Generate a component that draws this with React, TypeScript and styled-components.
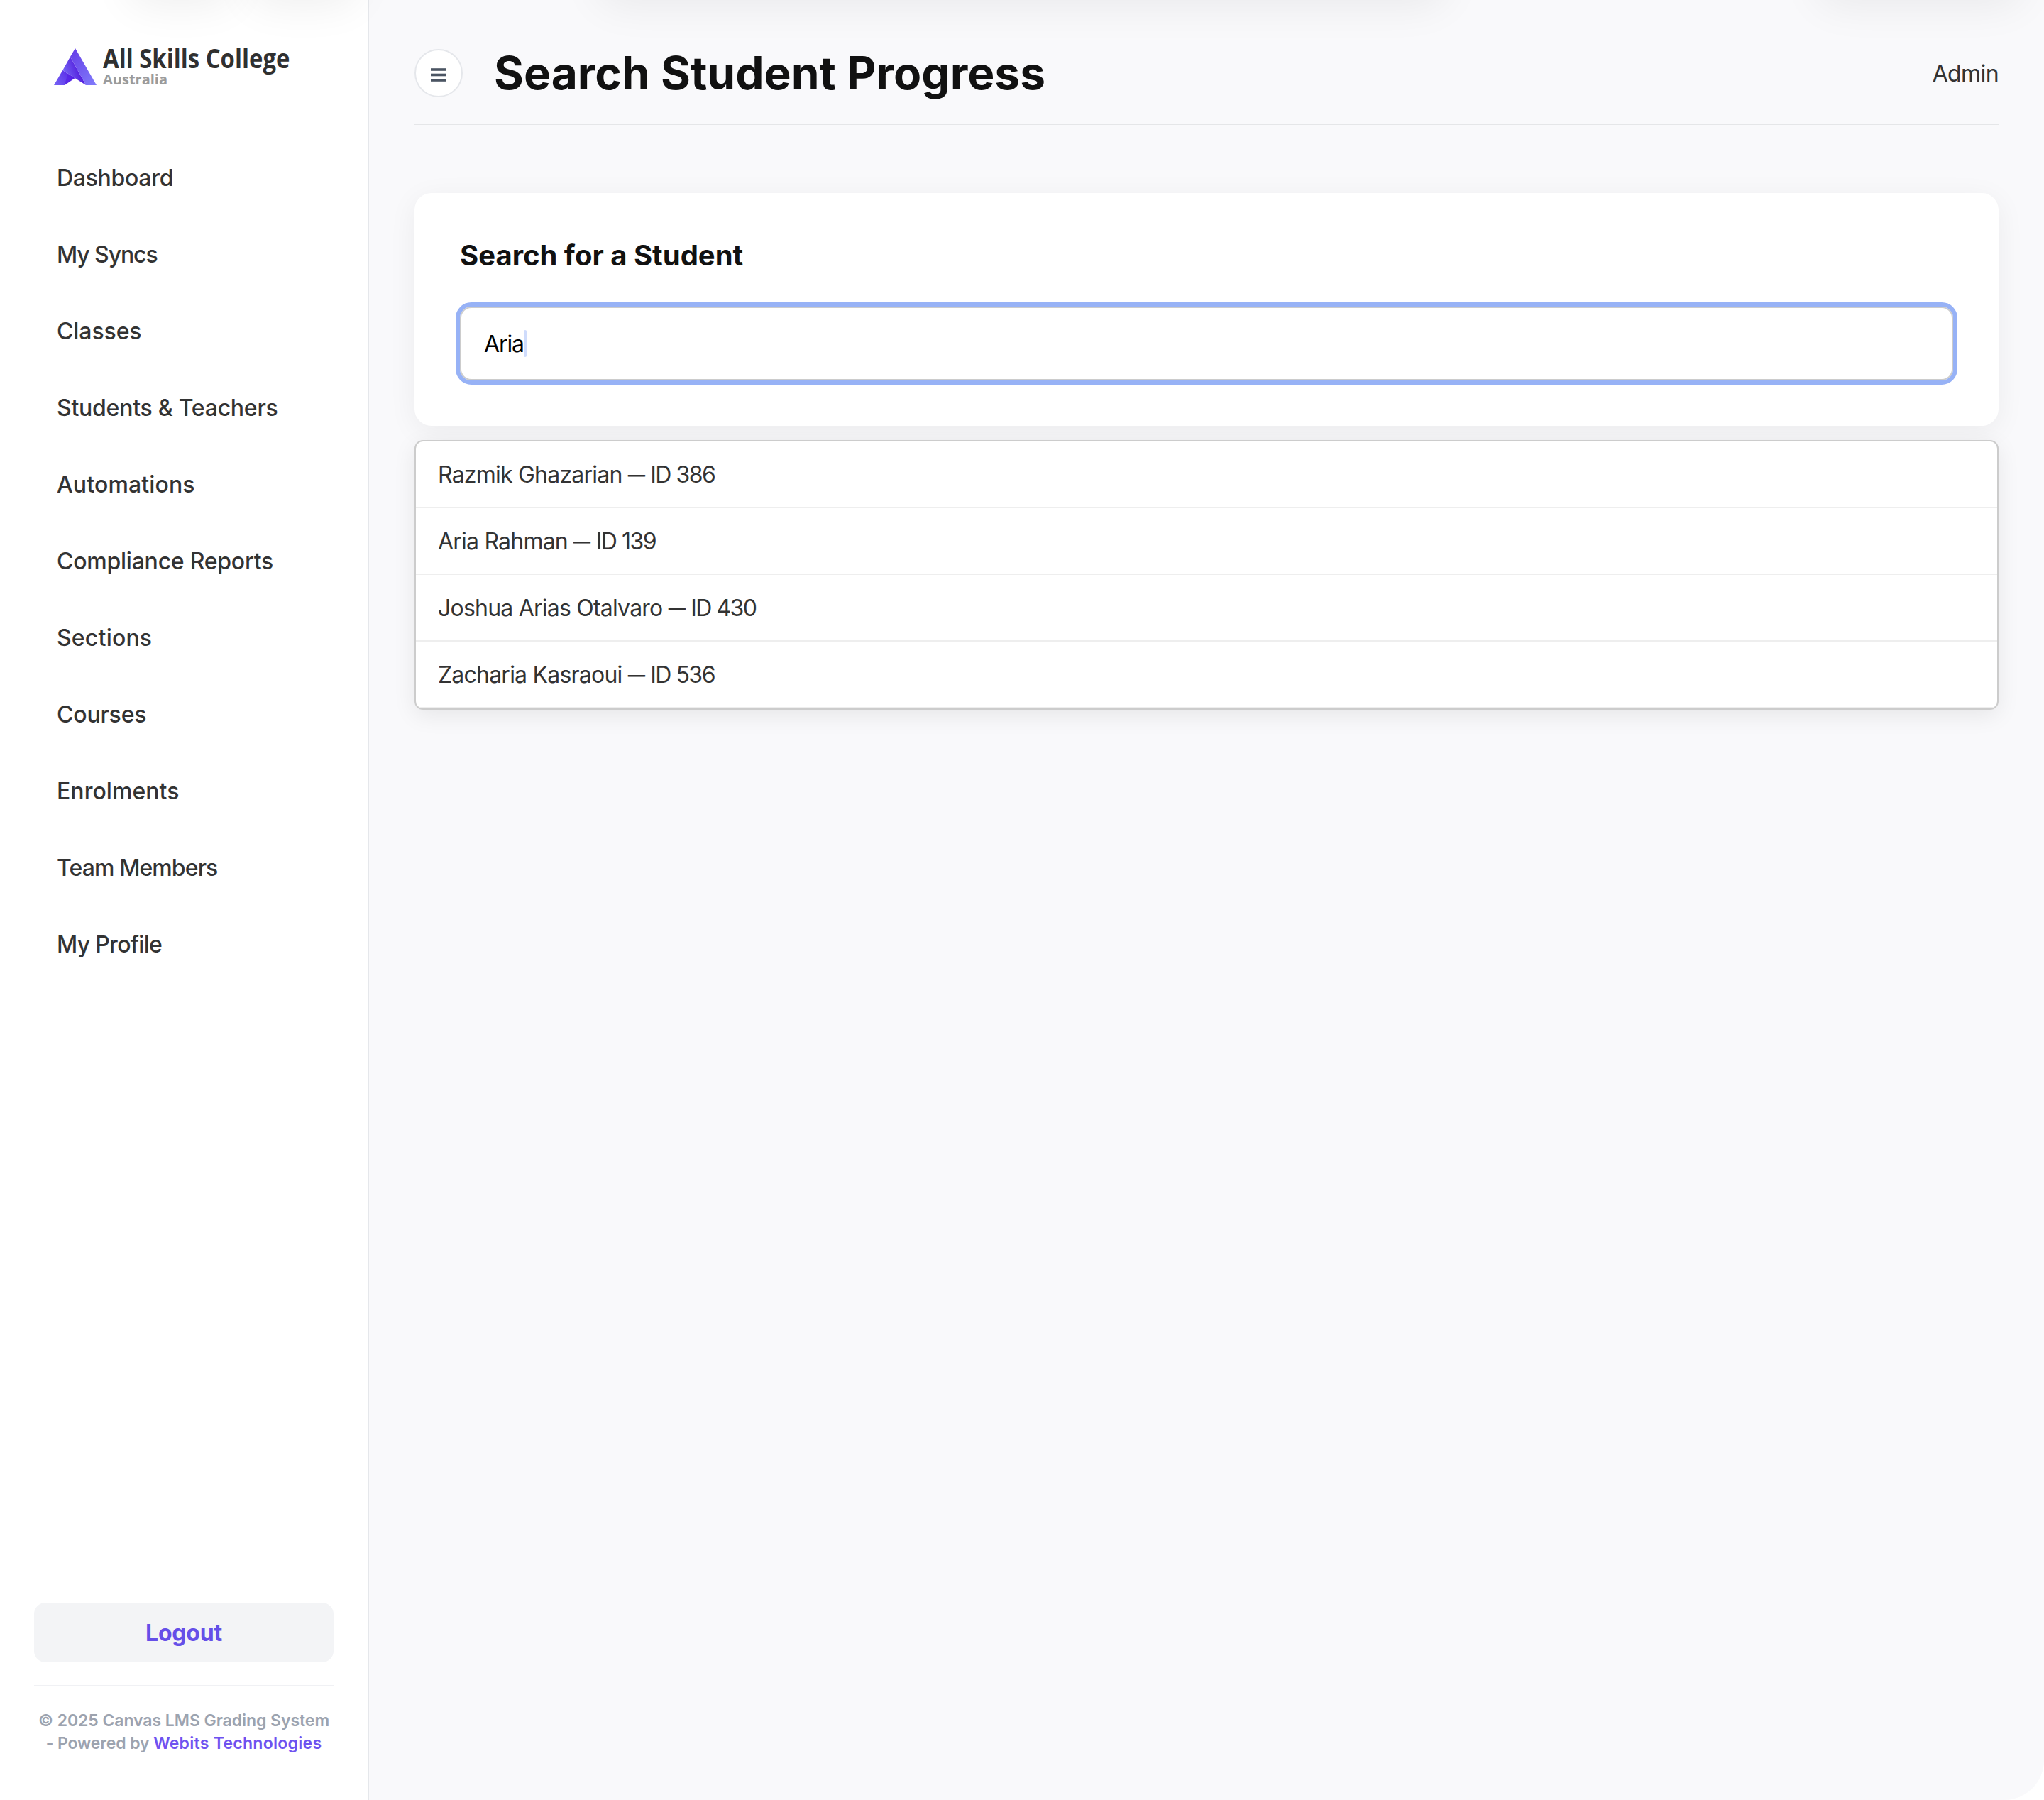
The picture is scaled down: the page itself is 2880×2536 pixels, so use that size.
import styled, { createGlobalStyle } from 'styled-components';

interface INavItem {
  label: string;
  tracking: number;
}

interface IStudent {
  id: number;
  name: string;
}

const navItems: INavItem[] = [
  { label: 'Dashboard', tracking: -0.3 },
  { label: 'My Syncs', tracking: -1.1 },
  { label: 'Classes', tracking: -0.1 },
  { label: 'Students & Teachers', tracking: -0.25 },
  { label: 'Automations', tracking: 0.14 },
  { label: 'Compliance Reports', tracking: -0.24 },
  { label: 'Sections', tracking: 0.2 },
  { label: 'Courses', tracking: -0.2 },
  { label: 'Enrolments', tracking: 0.05 },
  { label: 'Team Members', tracking: -0.9 },
  { label: 'My Profile', tracking: -0.7 },
];

const students: IStudent[] = [
  { id: 386, name: 'Razmik Ghazarian' },
  { id: 139, name: 'Aria Rahman' },
  { id: 430, name: 'Joshua Arias Otalvaro' },
  { id: 536, name: 'Zacharia Kasraoui' },
];

const LogoMark = () => (
  <svg width="60" height="52" viewBox="0 0 60 52">
    <defs>
      <linearGradient id="band" x1="0.2" y1="0" x2="0.9" y2="1">
        <stop offset="0" stopColor="#6741e8" />
        <stop offset="1" stopColor="#8079fa" />
      </linearGradient>
      <linearGradient id="fold" x1="0.1" y1="0.6" x2="0.65" y2="0.35">
        <stop offset="0" stopColor="#7563f3" />
        <stop offset="1" stopColor="#5420de" />
      </linearGradient>
      <linearGradient id="leg" x1="0" y1="0.8" x2="1" y2="0.3">
        <stop offset="0" stopColor="#7460f4" />
        <stop offset="1" stopColor="#5522e6" />
      </linearGradient>
    </defs>
    <path d="M12.3 31 29.5 42 15 52H0Z" fill="url(#leg)" />
    <path d="M19.5 35.5 29.5 42 15 52Z" fill="#541de4" opacity="0.6" />
    <path d="M23 12 45.2 52 29.5 42 12.3 31Z" fill="url(#fold)" />
    <path d="M30 0 60 52H45.2L23 12Z" fill="url(#band)" />
  </svg>
);

const MenuIcon = () => (
  <svg width="22" height="19" viewBox="0 0 22 19" fill="#4b5563">
    <rect y="0.2" width="22" height="3.6" />
    <rect y="7.7" width="22" height="3.6" />
    <rect y="15.2" width="22" height="3.6" />
  </svg>
);

const Sidebar = () => (
  <SidebarStyled>
    <Brand>
      <LogoMark />
      <BrandText>
        <BrandName>All Skills College</BrandName>
        <BrandRegion>Australia</BrandRegion>
      </BrandText>
    </Brand>
    <Nav>
      {navItems.map(({ label, tracking }) => (
        <NavLink key={label} $tracking={tracking}>
          {label}
        </NavLink>
      ))}
    </Nav>
    <LogoutButton>Logout</LogoutButton>
    <Copyright>
      <CopyrightLine $tracking={-0.06}>© 2025 Canvas LMS Grading System</CopyrightLine>
      <CopyrightLine $tracking={-0.12}>
        - Powered by <CompanyLink>Webits Technologies</CompanyLink>
      </CopyrightLine>
    </Copyright>
  </SidebarStyled>
);

const StudentResults = () => (
  <Results>
    {students.map(({ id, name }) => (
      <ResultRow key={id}>
        {name} <Dash>—</Dash> <StudentId>ID {id}</StudentId>
      </ResultRow>
    ))}
  </Results>
);

export default function App() {
  return (
    <>
      <GlobalStyle />
      <Page>
        <Sidebar />
        <Main>
          <Header>
            <MenuButton>
              <MenuIcon />
            </MenuButton>
            <PageTitle>Search Student Progress</PageTitle>
            <UserName>Admin</UserName>
          </Header>
          <SearchCard>
            <CardTitle>Search for a Student</CardTitle>
            <SearchField>
              <SearchValue>Aria</SearchValue>
              <Caret />
            </SearchField>
          </SearchCard>
          <StudentResults />
        </Main>
        <TopShadow $left={180} $width={150} />
        <TopShadow $left={350} $width={155} />
        <TopShadow $left={842} $width={1196} />
        <TopShadow $left={2560} $width={290} />
      </Page>
    </>
  );
}

const GlobalStyle = createGlobalStyle`
  * {
    box-sizing: border-box;
  }
  body {
    margin: 0;
    background: #ffffff;
    color: #333333;
    font-family: Inter, 'Liberation Sans', sans-serif;
    font-size: 32px;
  }
`;

const Page = styled.div`
  position: relative;
  display: flex;
  height: 2536px;
  overflow: hidden;
`;

const SidebarStyled = styled.aside`
  display: flex;
  flex-direction: column;
  flex: 0 0 520px;
  padding: 66px 48px 64px;
  border-right: 2px solid #e5e7eb;
  background: #ffffff;
`;

const Brand = styled.div`
  display: flex;
  align-items: center;
  gap: 9px;
  height: 56px;
  margin: 0 0 75px 28px;
`;

const BrandText = styled.div`
  display: flex;
  flex-direction: column;
  gap: 4px;
  font-family: 'Open Sans', 'Noto Sans', sans-serif;
  white-space: nowrap;
`;

const BrandName = styled.span`
  color: #303030;
  font-size: 37px;
  font-weight: 700;
  line-height: 32px;
  transform: scaleX(0.888);
  transform-origin: left center;
`;

const BrandRegion = styled.span`
  color: #9b9b9b;
  font-size: 20px;
  font-weight: 700;
  line-height: 20px;
`;

const Nav = styled.nav`
  display: flex;
  flex-direction: column;
  flex: 1;
`;

const NavLink = styled.a<{ $tracking: number }>`
  height: 108px;
  padding-left: 32px;
  font-weight: 500;
  line-height: 108px;
  letter-spacing: ${({ $tracking }) => $tracking}px;
`;

const LogoutButton = styled.button`
  height: 84px;
  padding: 0;
  border: 0;
  border-radius: 16px;
  background: #f3f4f6;
  color: #654fe8;
  font: 700 32px Inter, sans-serif;
  letter-spacing: -0.2px;
`;

const Copyright = styled.div`
  margin-top: 32px;
  padding-top: 32px;
  border-top: 2px solid #f0f1f4;
  color: #9ca3af;
  font-size: 23px;
  font-weight: 600;
  line-height: 32px;
  text-align: center;
  white-space: nowrap;
`;

const CopyrightLine = styled.div<{ $tracking: number }>`
  letter-spacing: ${({ $tracking }) => $tracking}px;
`;

const CompanyLink = styled.a`
  color: #6f52f0;
  letter-spacing: 0.28px;
`;

const Main = styled.main`
  flex: 1;
  padding: 32px 64px;
  border-bottom-right-radius: 56px;
  background: #f9f9fb;
`;

const Header = styled.header`
  display: flex;
  align-items: center;
  height: 144px;
  margin-bottom: 96px;
  border-bottom: 2px solid #e5e6e8;
`;

const MenuButton = styled.button`
  display: flex;
  align-items: center;
  justify-content: center;
  width: 68px;
  height: 68px;
  padding: 5px 0 0;
  border: 2px solid #e5e7eb;
  border-radius: 50%;
  background: #ffffff;
`;

const PageTitle = styled.h1`
  flex: 1;
  margin: 0 0 0 44px;
  color: #111111;
  font-size: 64px;
  font-weight: 700;
  line-height: 78px;
`;

const UserName = styled.span`
  letter-spacing: -0.6px;
`;

const SearchCard = styled.section`
  padding: 64px;
  border-radius: 24px;
  background: #ffffff;
  box-shadow: 0 8px 40px rgba(0, 0, 0, 0.06);
`;

const CardTitle = styled.h2`
  margin: 0 0 48px;
  color: #111111;
  font-size: 40px;
  font-weight: 700;
  line-height: 48px;
`;

const SearchField = styled.div`
  display: flex;
  align-items: center;
  height: 104px;
  padding: 0 32px;
  border: 2px solid #cccccc;
  border-radius: 16px;
  outline: 6px solid #97b2f6;
  color: #000000;
`;

const SearchValue = styled.span`
  letter-spacing: -1.1px;
`;

const Caret = styled.span`
  width: 4px;
  height: 38px;
  border-radius: 2px;
  background: #cfdcfc;
`;

const Results = styled.ul`
  margin: 20px 0 0;
  padding: 0;
  overflow: hidden;
  border: 2px solid #cccccc;
  border-radius: 12px;
  background: #ffffff;
  box-shadow: 0 8px 32px rgba(0, 0, 0, 0.08);
  list-style: none;
`;

const ResultRow = styled.li`
  height: 94px;
  padding: 1px 31px 0;
  border-bottom: 2px solid #eeeeee;
  line-height: 92px;
  letter-spacing: -0.78px;
`;

const Dash = styled.span`
  display: inline-block;
  margin: 0 -4px;
  transform: scaleX(0.76);
`;

const StudentId = styled.span`
  letter-spacing: -1.5px;
`;

const TopShadow = styled.div<{ $left: number; $width: number }>`
  position: absolute;
  top: -80px;
  left: ${({ $left }) => $left}px;
  width: ${({ $width }) => $width}px;
  height: 80px;
  border-radius: 30px;
  box-shadow: 0 8px 60px rgba(0, 0, 0, 0.065);
  pointer-events: none;
`;
